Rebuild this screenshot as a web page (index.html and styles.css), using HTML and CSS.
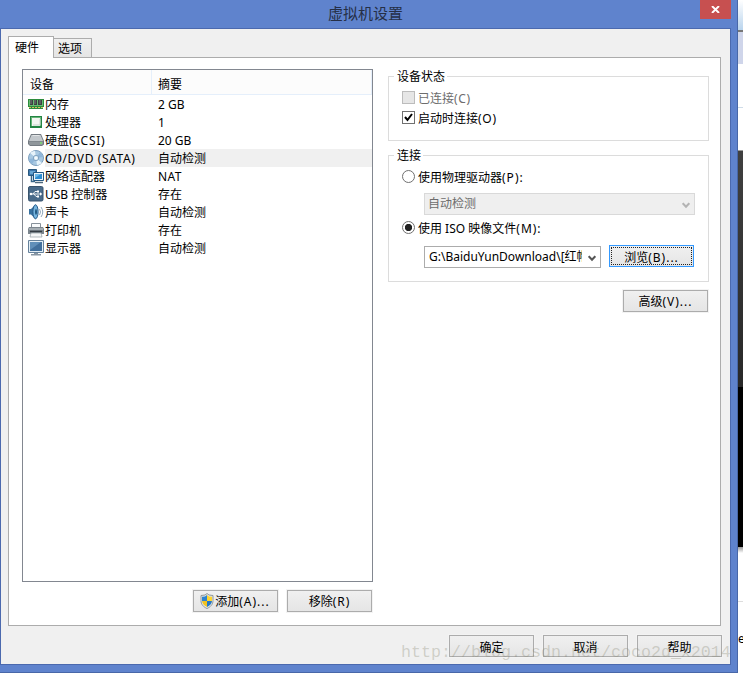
FILE: index.html
```html
<!DOCTYPE html>
<html lang="zh-CN">
<head>
<meta charset="utf-8">
<title>虚拟机设置</title>
<link rel="stylesheet" href="styles.css">
</head>
<body>
<div class="desktop">
<main class="window">
  <header class="titlebar">
    <h1>虚拟机设置</h1>
    <button class="close" aria-label="关闭"><svg width="9" height="7" viewBox="0 0 9 7"><path d="M1 0 8 7M8 0 1 7" stroke="#fff" stroke-width="1.9" fill="none"/></svg></button>
  </header>
  <div class="client">
    <nav class="tabs"><div class="tab active">硬件</div><div class="tab">选项</div></nav>
    <section class="panel">
      <div class="left">
        <div class="list">
          <div class="head"><span>设备</span><span>摘要</span></div>
          <div class="row"><svg class="icon" viewBox="0 0 16 16"><path d="M0 3h16v8h-1v2H1v-2H0z" fill="#2c8c3d"/><path d="M1 4h14v6H1z" fill="#67bd72"/><path d="M2 4h3v5H2zM6 4h3v5H6zM10 4h4v5h-4z" fill="#3b4142"/><path d="M3 4v4M7 4v4M12 4v4" stroke="#78807c"/><path d="M1 11.5h14" stroke="#d9bd62" stroke-dasharray="2 1"/></svg><span class="name">内存</span><span>2 GB</span></div>
          <div class="row"><svg class="icon" viewBox="0 0 16 16"><path d="M2 2h12v12H2z" fill="#238443"/><path d="M3 3h10v9H3z" fill="#66b678"/><path d="M4 4h8v8H4z" fill="#f3f5f1"/><path d="M5 11h7V5" fill="none" stroke="#c6d3cb"/></svg><span class="name">处理器</span><span>1</span></div>
          <div class="row"><svg class="icon" viewBox="0 0 16 16"><path d="m3 2 10 0 3 7v3.500L14 14H2L0 12V9z" fill="#737a81"/><path d="M3.500 3h9L15 9H1z" fill="#c3c8cc"/><path d="M1 9.500h14V12l-1 1H2l-1-1z" fill="#8f969b"/><path d="M12 11h2" stroke="#77e46b" stroke-width="1.300"/><path d="M4.500 3.500h7" stroke="#e4e6e7"/></svg><span class="name">硬盘<span class="spaced">(SCSI)</span></span><span>20 GB</span></div>
          <div class="row selected"><svg class="icon" viewBox="0 0 16 16"><circle cx="8" cy="8" r="7.5" fill="#a9c9e2" stroke="#7d9fbe"/><path d="M8 8 2 3a8 8 0 0 1 5-2zM8 8l6 5a8 8 0 0 1-5 2z" fill="#e7f3fa"/><path d="M8 8 1 9a7 7 0 0 0 3 5zM8 8l7-1a7 7 0 0 0-3-5z" fill="#8fb6d9"/><circle cx="8" cy="8" r="2.700" fill="#dcecf5" stroke="#648bb0" stroke-width=".7"/><circle cx="8" cy="8" r="1" fill="#fff"/></svg><span class="name wide">CD/DVD (SATA)</span><span>自动检测</span></div>
          <div class="row"><svg class="icon" viewBox="0 0 16 16"><path d="M.5 1.500h8v6h-8z" fill="#3d78ad" stroke="#28577e"/><path d="M2 3h5v3H2z" fill="#67a5d3"/><path d="M3.500 8v5.500H7" fill="none" stroke="#386689" stroke-width="1.500"/><path d="M5.500 4.500h10v8h-10z" fill="#e9f3fa" stroke="#245782"/><path d="M7 6h7v5H7z" fill="#2d8bcf"/><path d="M7 6h6l-6 4z" fill="#6db9e8"/><path d="M7 14.500h8" stroke="#4d687d" stroke-width="1.500"/></svg><span class="name">网络适配器</span><span class="nat">NAT</span></div>
          <div class="row"><svg class="icon" viewBox="0 0 16 16"><rect x=".5" y=".5" width="14.500" height="14.500" rx="1.500" fill="#496a89" stroke="#38536c"/><path d="M2 8h11M5 8l2-2.500h3M6 8l2 2.500h2" fill="none" stroke="#fff" stroke-width=".9"/><circle cx="3" cy="8" r="1.300" fill="#fff"/><path d="m12 6.300 2.300 1.700-2.300 1.700zM9 4.500h2v2H9zM9 9.500h2v2H9z" fill="#fff"/></svg><span class="name">USB 控制器</span><span>存在</span></div>
          <div class="row"><svg class="icon" viewBox="0 0 16 16"><path d="M1 5h2l4-4 1-.5V15l-1-.5-4-4H1z" fill="#37719f"/><ellipse cx="7.500" cy="7.800" rx="2.600" ry="7" fill="#76b5df" stroke="#285b89"/><ellipse cx="8" cy="8" rx="1" ry="3" fill="#21577f"/><path d="M11.500 5q2 3 0 6M13 3q3.500 5 0 10" fill="none" stroke="#91a9bc"/></svg><span class="name">声卡</span><span>自动检测</span></div>
          <div class="row"><svg class="icon" viewBox="0 0 16 16"><path d="M3.500 1.500h9v5h-9z" fill="#f8fafb" stroke="#87919a"/><path d="M1 5h14l1 2v5H0V7z" fill="#7b858d"/><path d="M1 6h14v2H1z" fill="#a5adb3"/><path d="M2 9.500h12" stroke="#343d44" stroke-width="1.500"/><path d="M3 11h10l1 4H2z" fill="#f5f7f8" stroke="#929da5" stroke-width=".7"/></svg><span class="name">打印机</span><span>存在</span></div>
          <div class="row"><svg class="icon" viewBox="0 0 16 16"><path d="M.5.5h15v12H.5z" fill="#e2edf4" stroke="#65819b"/><path d="M2 2h12v9H2z" fill="#416f9c"/><path d="M2 2h11L2 10z" fill="#608fb9"/><path d="M6 13h4v1h3v1.500H3V14h3z" fill="#8796a3"/></svg><span class="name">显示器</span><span>自动检测</span></div>
        </div>
        <div class="actions">
          <button class="btn"><svg width="14" height="16" viewBox="0 0 14 16"><path d="M7 .5 9 2l4 .5v5c0 4-2.300 6.300-6 8-3.700-1.700-6-4-6-8v-5L5 2z" fill="#e4e8ea" stroke="#929899"/><path d="M7 2 5 3.500l-3 .3V8h5z" fill="#2d83cf"/><path d="m7 2 2 1.500 3 .3V8H7z" fill="#ffd52e"/><path d="M2 8h5v6C4 12.500 2.300 11 2 8z" fill="#f3c320"/><path d="M7 8h5c-.3 3-2 4.500-5 6z" fill="#2678c4"/></svg><span>添加<span class="latin">(A)...</span></span></button>
          <button class="btn"><span>移除<span class="latin">(R)</span></span></button>
        </div>
      </div>
      <div class="right">
        <fieldset class="status"><legend>设备状态</legend>
          <label class="option muted"><span class="check disabled"></span><span>已连接<span class="spaced">(C)</span></span></label>
          <label class="option"><span class="check"><svg width="11" height="11" viewBox="0 0 11 11"><path d="m2 5 2.500 3L9 2" fill="none" stroke="#000" stroke-width="2"/></svg></span><span>启动时连接<span class="spaced">(O)</span></span></label>
        </fieldset>
        <fieldset class="connection"><legend>连接</legend>
          <label class="option"><span class="radio"></span><span>使用物理驱动器<span class="latin">(P):</span></span></label>
          <div class="combo disabled"><span>自动检测</span><svg width="8" height="7" viewBox="0 0 8 7"><path d="m.7 1.200 3.300 3.500 3.300-3.500" fill="none" stroke="#b3b3b3" stroke-width="2"/></svg></div>
          <label class="option iso"><span class="radio on"></span><span>使用 ISO 映像文件<span class="latin">(M):</span></span></label>
          <div class="filepick"><div class="combo"><span class="path">G:\BaiduYunDownload\[红帽</span><svg width="8" height="7" viewBox="0 0 8 7"><path d="m.7 1.200 3.300 3.500 3.300-3.500" fill="none" stroke="#555" stroke-width="2"/></svg></div><button class="btn focus"><span>浏览<span class="latin">(B)...</span></span></button></div>
        </fieldset>
        <button class="btn advanced"><span>高级<span class="latin">(V)...</span></span></button>
      </div>
    </section>
    <footer class="footer"><button class="btn">确定</button><button class="btn">取消</button><button class="btn">帮助</button></footer>
  </div>
</main>
<aside class="behind"><div class="sky"></div><div class="lavender"></div><div class="white"></div><div class="paper"></div><div class="dark"></div><div class="black"></div><div class="page"></div><div class="foot">e</div></aside>
<div class="watermark">http://blog.csdn.net/coco2d_x2014</div>
</div>
</body>
</html>
```
FILE: styles.css
```css
* { box-sizing: border-box; }
body { margin: 0; background: #fff; color: #000; font: 12px/18px "Noto Sans", "Noto Sans CJK SC", sans-serif; overflow: hidden; }
button { font: inherit; color: inherit; padding: 0; margin: 0; }
svg { display: block; flex: none; }
.desktop { display: flex; width: 743px; height: 673px; position: relative; overflow: hidden; }
.window { width: 738px; height: 673px; background: #5f83cd; border: 0 solid #4867a8; border-width: 0 1px 1px 0; }
.titlebar { height: 28px; display: grid; grid-template-columns: 700px 31px; }
.titlebar h1 { margin: 0; padding-left: 31px; text-align: center; font-size: 15px; line-height: 27px; font-weight: 400; color: #252f46; }
.close { background: #c75050; border: 0; height: 19px; display: flex; align-items: center; justify-content: center; }
.client { width: 731px; height: 637px; background: #f0f0f0; border: 1px solid #4b69ae; padding: 7px 8px 0 7px; }
.tabs { height: 22px; display: flex; align-items: flex-end; margin-bottom: -1px; }
.tab { width: 38px; height: 20px; border: 1px solid #acacac; border-left: 0; background: linear-gradient(#f0f0f0, #e5e5e5); line-height: 20px; padding-left: 4px; }
.tab.active { width: 46px; height: 22px; background: #fff; border-left: 1px solid #acacac; border-bottom: 0; padding-left: 6px; position: relative; line-height: 21px; }
.panel { width: 713px; height: 569px; background: #fff; border: 1px solid #acacac; display: grid; grid-template-columns: 351px 321px; column-gap: 15px; padding: 11px 0 0 13px; }
.list { height: 513px; border: 1px solid #828790; }
.head { width: 349px; height: 25px; background: #fcfcfc; border-bottom: 1px solid #e5effb; border-right: 1px solid #e5effb; display: grid; grid-template-columns: 129px 1fr; grid-template-rows: 24px; line-height: 29px; }
.head span { padding-left: 6px; }
.head span:first-child { padding-left: 7px; border-right: 1px solid #e5effb; }
.row { height: 18px; display: grid; grid-template-columns: 16px 113px 1fr; grid-template-rows: 18px; padding-left: 5px; line-height: 20px; white-space: nowrap; }
.row > span:last-child { padding-left: 1px; }
.icon { width: 16px; height: 16px; margin-top: 1px; }
.name { padding-left: 1px; }
.wide { letter-spacing: .6px; }
.nat { letter-spacing: .4px; }
.spaced { letter-spacing: .7px; }
.latin { letter-spacing: 1px; }
.selected { background: linear-gradient(90deg, #fff 22px, #f0f0f0 22px); }
.actions { display: flex; justify-content: flex-end; gap: 9px; margin: 8px 1px 0 0; }
.btn { flex: none; width: 85px; height: 22px; border: 1px solid #acacac; background: linear-gradient(#f0f0f0, #e5e5e5); outline: 1px solid #f3f3f3; display: flex; align-items: center; justify-content: center; white-space: nowrap; line-height: 22px; padding-top: 2px; gap: 1px; }
.btn svg { margin: -2px 0 0 -1px; }
fieldset { margin: 0; min-width: 0; border: 1px solid #dcdcdc; width: 321px; }
legend { height: 18px; line-height: 20px; padding: 0 2px 0 3px; margin-left: -8px; }
.status { height: 74px; padding: 4px 0 0 13px; margin-top: -2px; }
.connection { height: 136px; margin-top: 5px; padding: 4px 0 0 13px; }
.option { height: 20px; display: flex; align-items: flex-start; gap: 3px; line-height: 20px; }
.muted, .disabled { color: #6d6d6d; }
.check { width: 13px; height: 13px; border: 1px solid #707070; background: #fff; flex: none; margin-top: 2px; }
.check.disabled { background: #e6e6e6; border-color: #bcbcbc; }
.radio { width: 13px; height: 13px; border: 1px solid #707070; border-radius: 50%; background: #fff; flex: none; margin-top: 2px; }
.radio.on { background: radial-gradient(circle, #222 0 3.3px, #fff 4px); }
.combo { display: flex; align-items: center; justify-content: space-between; height: 22px; border: 1px solid #acacac; background: #fff; padding: 0 4px 0 4px; line-height: 20px; }
.combo svg { margin-top: 2px; }
.combo.disabled { width: 271px; margin: 5px 0 4px 22px; border-color: #d9d9d9; background: #efefef; line-height: 22px; }
.combo.disabled span { margin-left: -1px; }
.path { width: 153px; height: 20px; overflow: hidden; white-space: nowrap; }
.filepick { display: flex; gap: 8px; margin: 7px 0 0 22px; }
.filepick .combo { width: 177px; }
.focus { border-color: #3399ff; outline: 0; padding: 1px; margin-top: -1px; }
.focus > span { width: 81px; height: 18px; border: 1px dotted #222; line-height: 20px; }
.advanced { margin: 8px 0 0 235px; }
.footer { display: flex; gap: 9px; padding: 9px 0 0 441px; width: 720px; }
.footer .btn { padding-top: 3px; }
.behind { width: 5px; height: 673px; overflow: hidden; }
.sky { height: 32px; background: linear-gradient(#fff, #b9d4ed); border-bottom: 2px solid #777; }
.lavender { height: 32px; background: #cfd5ea; }
.white { height: 44px; background: #fff; border-bottom: 1px solid #cfdce8; }
.paper { height: 43px; background: #fff; border-bottom: 1px solid #999; }
.dark { height: 236px; background: linear-gradient(#404040, #282828); }
.black { height: 160px; background: #000; }
.page { height: 55px; background: linear-gradient(#999, #fff 6px); border-bottom: 1px solid #ddd; }
.foot { height: 71px; padding-top: 27px; line-height: 20px; background: #fff; }
.watermark { position: absolute; left: 401px; top: 641px; font: 16.67px/24px "Liberation Mono", monospace; color: rgba(135, 135, 115, .32); white-space: nowrap; }
```
